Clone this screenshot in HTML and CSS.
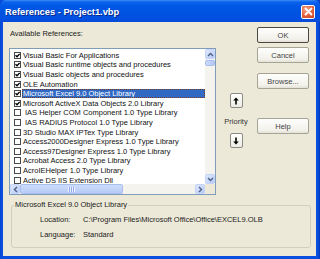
FILE: index.html
```html
<!DOCTYPE html>
<html lang="en">
<head>
    <meta charset="UTF-8">
    <title>References - Project1.vbp</title>
    <link rel="stylesheet" href="styles.css">
</head>
<body>
    <div class="window">
        <div class="titlebar">
            <span class="title">References - Project1.vbp</span>
            <span class="close">
                <svg width="9" height="9" viewBox="0 0 9 9"><path d="M1.5 1.5 L7.5 7.5 M7.5 1.5 L1.5 7.5" stroke="#fff" stroke-width="1.8" stroke-linecap="round"/></svg>
            </span>
        </div>

        <div class="client">
            <div class="top">
                <div class="left">
                    <div class="label">Available References:</div>
                    <div class="listbox">
                        <div class="items">
                            <div class="row"><span class="cb on"></span><span class="txt">Visual Basic For Applications</span></div>
                            <div class="row"><span class="cb on"></span><span class="txt">Visual Basic runtime objects and procedures</span></div>
                            <div class="row"><span class="cb on"></span><span class="txt">Visual Basic objects and procedures</span></div>
                            <div class="row"><span class="cb on"></span><span class="txt">OLE Automation</span></div>
                            <div class="row sel"><span class="cb on"></span><span class="txt">Microsoft Excel 9.0 Object Library</span></div>
                            <div class="row"><span class="cb on"></span><span class="txt">Microsoft ActiveX Data Objects 2.0 Library</span></div>
                            <div class="row"><span class="cb"></span><span class="txt indent">IAS Helper COM Component 1.0 Type Library</span></div>
                            <div class="row"><span class="cb"></span><span class="txt indent">IAS RADIUS Protocol 1.0 Type Library</span></div>
                            <div class="row"><span class="cb"></span><span class="txt">3D Studio MAX IPTex Type Library</span></div>
                            <div class="row"><span class="cb"></span><span class="txt">Access2000Designer Express 1.0 Type Library</span></div>
                            <div class="row"><span class="cb"></span><span class="txt">Access97Designer Express 1.0 Type Library</span></div>
                            <div class="row"><span class="cb"></span><span class="txt">Acrobat Access 2.0 Type Library</span></div>
                            <div class="row"><span class="cb"></span><span class="txt">AcroIEHelper 1.0 Type Library</span></div>
                            <div class="row"><span class="cb"></span><span class="txt">Active DS IIS Extension Dll</span></div>
                        </div>
                        <div class="vscroll">
                            <span class="sbtn"><svg width="7" height="5" viewBox="0 0 7 5"><path d="M1 4 L3.5 1.5 L6 4" fill="none" stroke="#4d6185" stroke-width="1.4"/></svg></span>
                            <span class="vthumb"></span>
                            <span class="vtrack"></span>
                            <span class="sbtn"><svg width="7" height="5" viewBox="0 0 7 5"><path d="M1 1 L3.5 3.5 L6 1" fill="none" stroke="#4d6185" stroke-width="1.4"/></svg></span>
                        </div>
                        <div class="hscroll">
                            <span class="sbtn"><svg width="5" height="7" viewBox="0 0 5 7"><path d="M4 1 L1.5 3.5 L4 6" fill="none" stroke="#4d6185" stroke-width="1.4"/></svg></span>
                            <span class="hthumb"><span class="grip"></span></span>
                            <span class="htrack"></span>
                            <span class="sbtn"><svg width="5" height="7" viewBox="0 0 5 7"><path d="M1 1 L3.5 3.5 L1 6" fill="none" stroke="#4d6185" stroke-width="1.4"/></svg></span>
                            <span class="corner"></span>
                        </div>
                    </div>
                </div>

                <div class="middle">
                    <span class="arrow-btn up"><svg width="6" height="8" viewBox="0 0 6 8"><path d="M3 0.5 L5.8 3.6 L3.8 3.6 L3.8 7.5 L2.2 7.5 L2.2 3.6 L0.2 3.6 Z" fill="#000"/></svg></span>
                    <span class="priority">Priority</span>
                    <span class="arrow-btn down"><svg width="6" height="8" viewBox="0 0 6 8"><path d="M3 7.5 L5.8 4.4 L3.8 4.4 L3.8 0.5 L2.2 0.5 L2.2 4.4 L0.2 4.4 Z" fill="#000"/></svg></span>
                </div>

                <div class="buttons">
                    <button class="btn default">OK</button>
                    <button class="btn cancel">Cancel</button>
                    <button class="btn browse">Browse...</button>
                    <button class="btn help">Help</button>
                </div>
            </div>

            <fieldset class="group">
                <legend>Microsoft Excel 9.0 Object Library</legend>
                <div class="info">
                    <span>Location:</span><span>C:\Program Files\Microsoft Office\Office\EXCEL9.OLB</span>
                    <span>Language:</span><span>Standard</span>
                </div>
            </fieldset>
        </div>
    </div>
</body>
</html>
```

FILE: styles.css
```css
* {
    margin: 0;
    padding: 0;
    box-sizing: border-box;
}

html, body {
    width: 320px;
    height: 259px;
    overflow: hidden;
    background-color: #fff;
    font-family: 'Liberation Sans', Arial, sans-serif;
    font-size: 7.5px;
    color: #000;
}

.window {
    width: 320px;
    height: 259px;
    display: flex;
    flex-direction: column;
    background: linear-gradient(to right, #0842c4 0, #0a4ee0 1px, #0a4ee0 318px, #0337b8 320px);
}

.titlebar {
    height: 22px;
    display: flex;
    align-items: center;
    justify-content: space-between;
    padding: 0 5px 0 5px;
    background: linear-gradient(#3d8df5 0, #0a62ec 2px, #0058e6 6px, #0052e0 14px, #0250e4 19px, #0a4ad2 22px);
    border-radius: 6px 6px 0 0;
}

.title {
    color: #fff;
    font-weight: bold;
    font-size: 9.3px;
    text-shadow: 1px 1px 0 #0a2a8a;
    padding-top: 1px;
}

.close {
    width: 14px;
    height: 14px;
    display: flex;
    align-items: center;
    justify-content: center;
    border: 1px solid #fff;
    border-radius: 2px;
    background: radial-gradient(circle at 35% 30%, #f3a68a 0, #e2603b 55%, #c5411f 100%);
    margin-top: 1px;
}

.client {
    flex: 1;
    margin: 0 4px 3px 3px;
    background-color: #ece9d8;
    display: flex;
    flex-direction: column;
}

.top {
    display: flex;
    padding-top: 5px;
}

.left {
    margin-left: 6px;
    width: 207px;
}

.label {
    padding-top: 2px;
    line-height: 10px;
    padding-left: 1px;
    color: #222;
}

.listbox {
    margin-top: 9px;
    height: 147px;
    border: 1px solid #7f9db9;
    background-color: #fff;
    display: grid;
    grid-template-columns: 1fr 10px;
    grid-template-rows: 1fr 10px;
}

.items {
    padding-top: 1.5px;
    overflow: hidden;
    white-space: nowrap;
}

.row {
    height: 9.6px;
    display: flex;
    align-items: center;
}

.cb {
    flex: none;
    width: 7px;
    height: 7px;
    margin-left: 4px;
    border: 1px solid #4a4a4a;
    background-color: #fff;
}

.cb.on {
    background: #fff url("data:image/svg+xml,%3Csvg xmlns='http://www.w3.org/2000/svg' width='5' height='5'%3E%3Cpath d='M0.5 2.3 L2 3.8 L4.6 0.9' fill='none' stroke='%23000' stroke-width='1.3'/%3E%3C/svg%3E") center no-repeat;
}

.txt {
    margin-left: 1px;
    padding: 0 1px;
    line-height: 9px;
    color: #111;
}

.txt.indent {
    padding-left: 3px;
}

.row.sel .txt {
    flex: 1;
    background-color: #316ac5;
    color: #fff;
    outline: 1px dotted #7a3d1e;
    outline-offset: -1px;
}

.vscroll {
    display: flex;
    flex-direction: column;
    background-color: #f4f3ee;
}

.hscroll {
    grid-column: 1 / 3;
    display: flex;
    background-color: #f4f3ee;
}

.sbtn {
    flex: none;
    width: 10px;
    height: 10px;
    display: flex;
    align-items: center;
    justify-content: center;
    background: linear-gradient(135deg, #dfe8fd, #b9cbf5);
    border: 1px solid #c3d3fb;
    border-radius: 2px;
}

.vthumb {
    height: 6px;
    margin-top: 1px;
    background: linear-gradient(to right, #cbdafc, #b4c8f6);
    border: 1px solid #a9bfee;
    border-radius: 2px;
}

.vtrack, .htrack {
    flex: 1;
}

.hthumb {
    width: 103px;
    display: flex;
    align-items: center;
    justify-content: center;
    background: linear-gradient(#cddcfc, #b8cbf6);
    border: 1px solid #a9bfee;
    border-radius: 2px;
}

.grip {
    width: 7px;
    height: 5px;
    background: repeating-linear-gradient(to right, #eef3fe 0, #eef3fe 1px, #8ca8e6 1px, #8ca8e6 2px);
}

.corner {
    width: 10px;
    background-color: #ece9d8;
}

.middle {
    width: 41px;
    display: flex;
    flex-direction: column;
    align-items: center;
    padding-top: 66px;
    padding-right: 1px;
}

.arrow-btn {
    width: 13px;
    height: 15px;
    display: flex;
    align-items: center;
    justify-content: center;
    background: linear-gradient(#fefefd, #ecebe4);
    border: 1px solid #8c8b82;
    border-radius: 2px;
}

.priority {
    margin-top: 9px;
    line-height: 10px;
    color: #333;
}

.arrow-btn.down {
    margin-top: 6px;
}

.buttons {
    width: 52px;
    display: flex;
    flex-direction: column;
}

.btn {
    height: 16px;
    font-family: 'Liberation Sans', Arial, sans-serif;
    font-size: 7.5px;
    color: #444;
    background: linear-gradient(#fefefd, #f2f1ea 80%, #e4e2d8);
    border: 1px solid #a6a495;
    border-radius: 2px;
}

.btn.default {
    border-color: #4a4940;
}

.btn.cancel {
    margin-top: 4px;
}

.btn.browse {
    margin-top: 10px;
}

.btn.help {
    margin-top: 29px;
}

.group {
    margin: 5px 0 0 8px;
    width: 300px;
    border: 1px solid #d0d0bf;
    border-radius: 3px;
    padding: 5px 2px 7px 2px;
}

.group legend {
    padding: 0 1px;
    line-height: 10px;
    color: #222;
}

.info {
    margin-left: 26px;
    display: grid;
    grid-template-columns: 43px auto;
    row-gap: 5px;
    line-height: 10px;
    color: #222;
}
```
